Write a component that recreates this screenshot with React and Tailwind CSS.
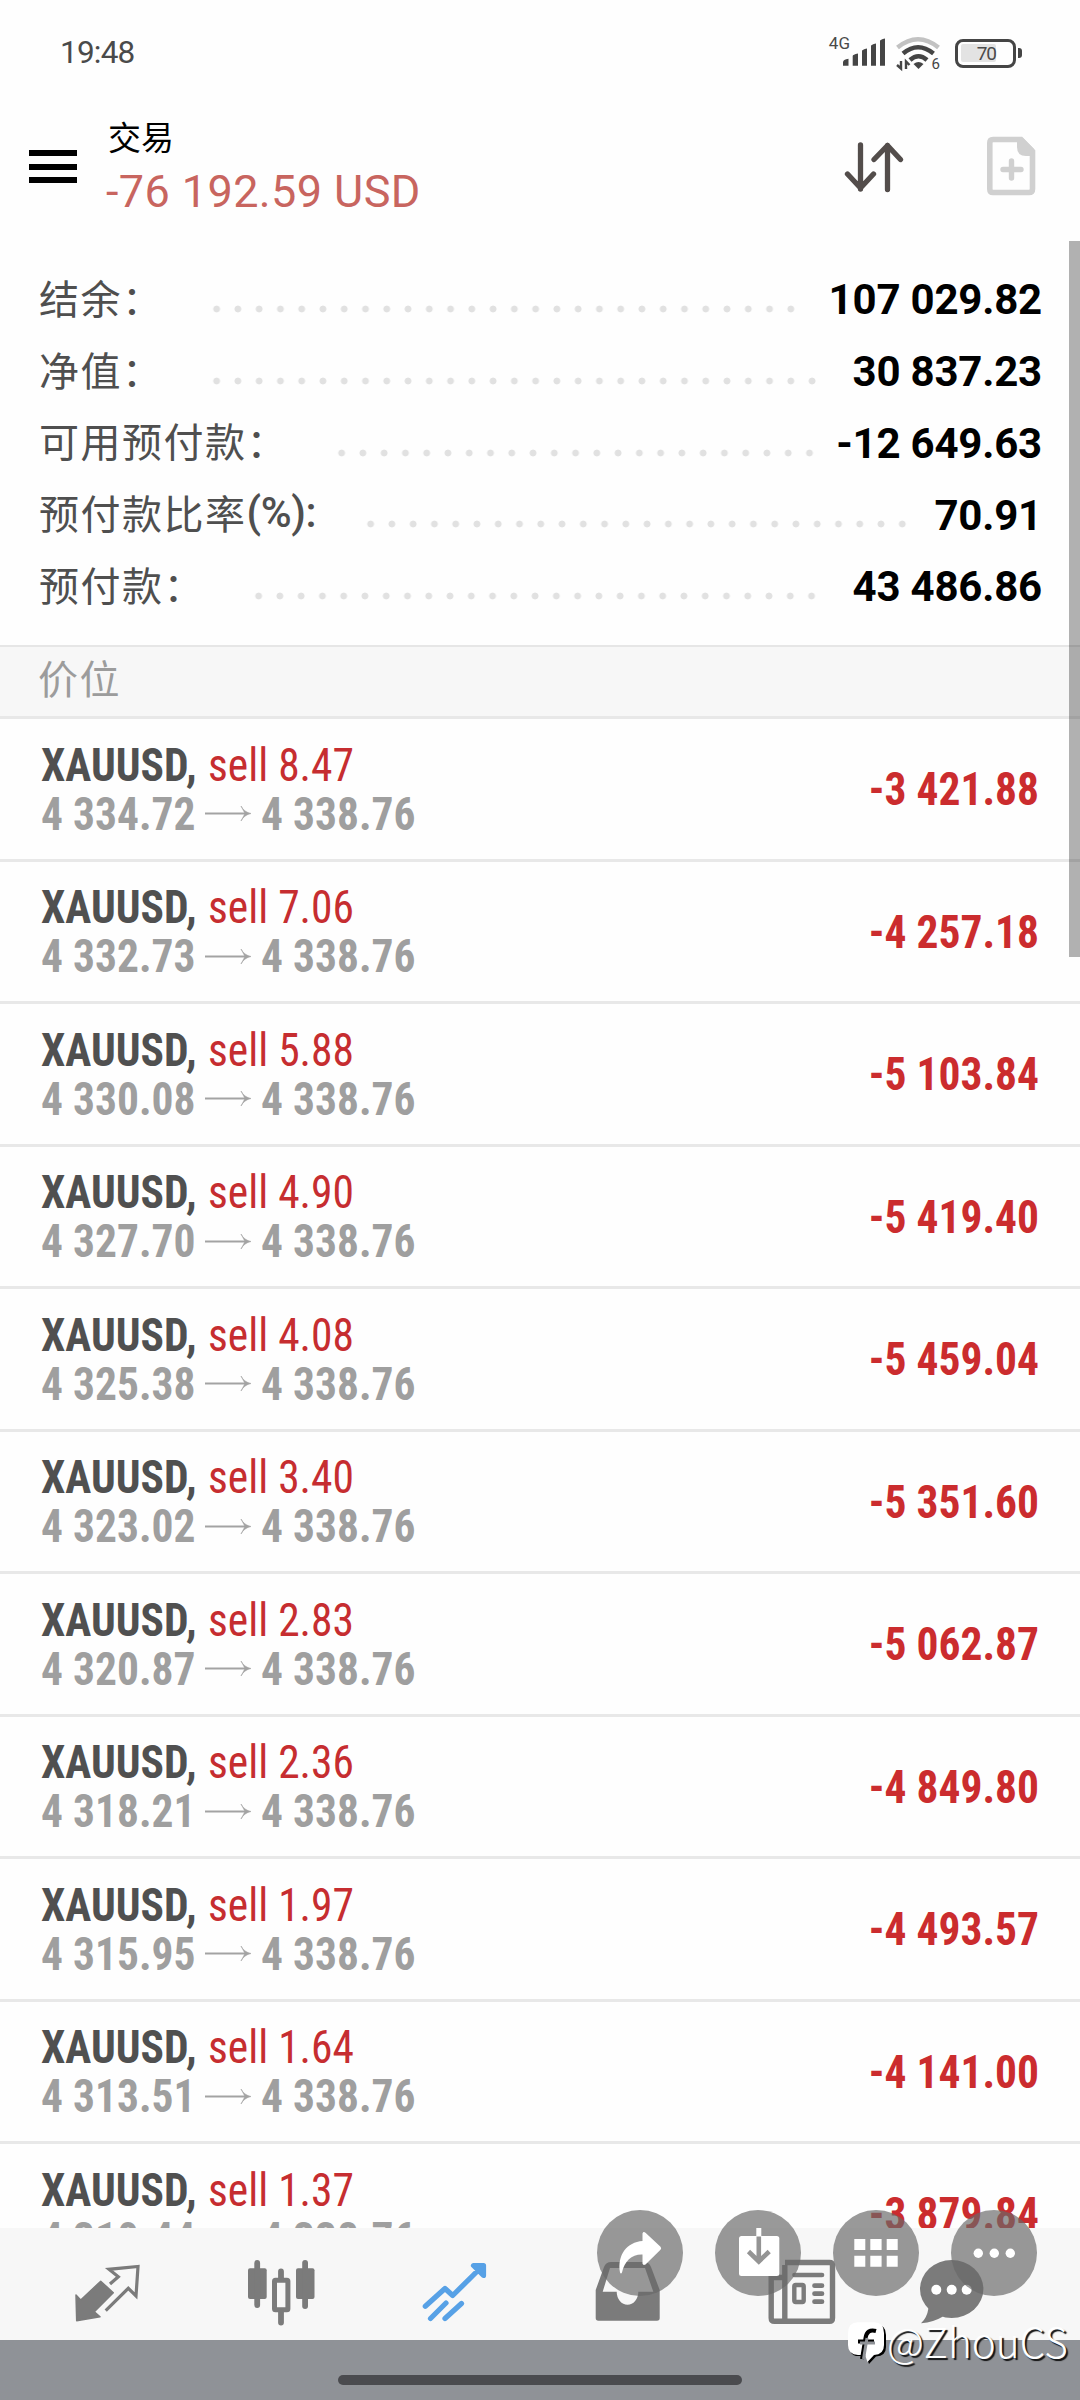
const summary = [
  { label: '结余：', value: '107 029.82', dots: 'ml-[213px] w-[596px]' },
  { label: '净值：', value: '30 837.23', dots: 'ml-[213px] w-[617px]' },
  { label: '可用预付款：', value: '-12 649.63', dots: 'ml-[338px] w-[490px]' },
  { label: '预付款比率', suffix: '(%):', value: '70.91', dots: 'ml-[367px] w-[554px]' },
  { label: '预付款：', value: '43 486.86', dots: 'ml-[255px] w-[575px]' },
];

const positions = [
  { lot: '8.47', open: '4 334.72', profit: '-3 421.88' },
  { lot: '7.06', open: '4 332.73', profit: '-4 257.18' },
  { lot: '5.88', open: '4 330.08', profit: '-5 103.84' },
  { lot: '4.90', open: '4 327.70', profit: '-5 419.40' },
  { lot: '4.08', open: '4 325.38', profit: '-5 459.04' },
  { lot: '3.40', open: '4 323.02', profit: '-5 351.60' },
  { lot: '2.83', open: '4 320.87', profit: '-5 062.87' },
  { lot: '2.36', open: '4 318.21', profit: '-4 849.80' },
  { lot: '1.97', open: '4 315.95', profit: '-4 493.57' },
  { lot: '1.64', open: '4 313.51', profit: '-4 141.00' },
  { lot: '1.37', open: '4 310.44', profit: '-3 879.84' },
];

const currentPrice = '4 338.76';

function StatusBar() {
  return (
    <div className="flex h-[106px] items-center justify-between pl-[60px] pr-[58px] text-[#4a4a4a]">
      <span className="text-[31.5px] leading-[38px] tracking-[-0.8px]">19:48</span>
      <div className="flex items-center">
        <span className="mb-[20px] text-[17px] leading-none">4G</span>
        <svg className="-ml-[9px]" width="54" height="36" fill="#454545">
          <path d="M2 30.7v-3.5q0-3 5.5-3.5v7zM11.7 30.7V21q0-1.5 5.3-2.500v12.200zM21 30.700V16q0-1.500 5-2.500v17.200zM30 30.700V11q0-1.500 5-2.500v22.200zM39 30.700V6q0-1.500 5-2.500v27.200z" />
        </svg>
        <svg className="mr-[12px]" width="48" height="38" fill="none" strokeWidth="4.500">
          <path d="M2.500 13.500Q23 -3 43.500 13.500" stroke="#c2c2c2" />
          <path d="M8 19.500Q23 7 38.500 19.500" stroke="#454545" />
          <path d="M15 26Q23.500 18.500 32 26" stroke="#454545" />
          <path d="M18.500 30q5-4 10 0l-5 5z" fill="#454545" />
          <path d="M6 27v7.500L2 31M11 35v-7.500l3.500 3.500" stroke="#454545" strokeWidth="2.400" />
          <text x="36.500" y="35" fontSize="15" fill="#454545" fontFamily="Roboto, sans-serif">6</text>
        </svg>
        <div className="flex h-[29px] w-[61px] items-center rounded-[8px] border-[3px] border-[#454545] pl-[3px]">
          <div className="flex h-[18px] w-[35px] items-center justify-end rounded-[2px] bg-[#e3e3e3] text-[19px] leading-none tracking-[-1px]">70</div>
        </div>
        <div className="ml-[2px] h-[10px] w-[4px] rounded-r-[3px] bg-[#454545]" />
      </div>
    </div>
  );
}

function Header() {
  return (
    <header className="flex h-[134px] items-start pl-[29px] pr-[44px]">
      <div className="mt-[44px] flex w-[48px] flex-col gap-[7.5px]">
        <div className="h-[6px] bg-black" />
        <div className="h-[6px] bg-black" />
        <div className="h-[6px] bg-black" />
      </div>
      <div className="ml-[29px] mt-[4px] flex-1">
        <div className="h-[53px] pl-[2px] font-['Noto_Sans_CJK_SC',sans-serif] text-[33px] leading-[52px] text-black">交易</div>
        <div className="h-[56px] text-[45px] leading-[57px] tracking-[0.4px] text-[#c8655f]">-76 192.59 USD</div>
      </div>
      <svg className="mt-[33px]" width="60" height="54" fill="none" stroke="#534d4b" strokeWidth="5.300" strokeLinecap="round" strokeLinejoin="round">
        <path d="M16.500 6v44M3.500 35l13 14 13-14M43.500 50.500V6.500M30 20.500l13.500-14 13 14" />
      </svg>
      <svg className="ml-[83px] mt-[30px]" width="49" height="60" fill="none">
        <path d="M6 3.500H34L45.500 15.500V53q0 3.500-3.500 3.500H6Q2.800 56.500 2.800 53V7q0-3.500 3.200-3.500z" stroke="#d0d0d0" strokeWidth="5.600" />
        <path d="M30 2h6l11 11v7h-8q-9 0-9-9z" fill="#d0d0d0" />
        <path d="M24.500 25v17M16 33.500h18" stroke="#d0d0d0" strokeWidth="5.400" strokeLinecap="round" />
      </svg>
    </header>
  );
}

function SummaryRow({ row }) {
  return (
    <div className="relative flex h-[71.75px] items-center justify-between pl-[39px] pr-[38px]">
      <span className="mb-[4px] flex items-center font-['Noto_Sans_CJK_SC',sans-serif] text-[40px] tracking-[1.5px] text-[#4f4f4f]">
        {row.label}
        {row.suffix && <span className="font-['Roboto',sans-serif] text-[42px] font-medium tracking-[-0.4px]">{row.suffix}</span>}
      </span>
      {/* dotted leader between label and amount */}
      <span className={`absolute left-0 top-[42px] h-[8px] bg-[radial-gradient(circle,#e1e1e1_3px,transparent_3.8px)] bg-[length:21.270px_8px] -translate-x-[7px] ${row.dots}`} />
      <span className="mt-[2px] text-[42px] font-bold tracking-[-0.2px] text-black">{row.value}</span>
    </div>
  );
}

function PositionRow({ item }) {
  return (
    <div className="flex h-[142.5px] items-center justify-between border-t-[3px] border-[#e8e8e8] pl-[41px] pr-[41px] font-['Roboto_Condensed','Roboto',sans-serif] text-[47px] leading-[49px]">
      <div>
        <div className="flex">
          <span className="w-[167px] origin-left scale-x-[0.925] font-bold text-[#505050]">XAUUSD,</span>
          <span className="origin-left scale-x-[0.925] text-[#c62d30]">sell {item.lot}</span>
        </div>
        <div className="flex items-center font-bold text-[#9f9f9f]">
          <span className="w-[164px] origin-left scale-x-[0.925] whitespace-nowrap">{item.open}</span>
          <svg className="mr-[9px]" width="47" height="18" fill="none" stroke="#a3a3a3">
            <path d="M0 9.500h43" strokeWidth="1.800" />
            <path d="M36 2q3 6 10 7.500q-7 1.500-10 7.500l4-7.500z" fill="#a3a3a3" strokeWidth="0.600" />
          </svg>
          <span className="origin-left scale-x-[0.925]">{currentPrice}</span>
        </div>
      </div>
      <span className="origin-right scale-x-[0.925] font-bold text-[#cb2c2e]">{item.profit}</span>
    </div>
  );
}

function NavBar() {
  return (
    <nav className="flex h-[112px] items-center bg-[#f7f7f7] pl-[21px] text-[#7b7b7b]">
      <div className="flex w-[173.500px] justify-center">
        <svg width="72" height="84">
          <path d="M28.700 39.300L41.300 50.700 22.300 69.700 28 74.700 4.700 78.700 4 53 8.700 58z" fill="currentColor" stroke="currentColor" strokeWidth="1.500" strokeLinejoin="round" />
          <path d="M38 42L46.300 34.700 37 27.300 66 24.500 64 54 56.300 46.300 33.700 68.700" fill="none" stroke="currentColor" strokeWidth="3.200" />
        </svg>
      </div>
      <div className="flex w-[173.500px] justify-center">
        <svg width="72" height="84" fill="currentColor">
          <rect x="3" y="26.300" width="18.700" height="30.700" rx="2" />
          <rect x="9.300" y="18" width="5.800" height="48" rx="2.900" />
          <rect x="51" y="26.300" width="18.500" height="30.700" rx="2" />
          <rect x="57.200" y="18" width="5.800" height="49" rx="2.900" />
          <rect x="29.500" y="38.200" width="13.400" height="29.600" rx="1" fill="none" stroke="currentColor" strokeWidth="5" />
          <path d="M36 29.500v7M36 70v10.500" stroke="currentColor" strokeWidth="5.800" strokeLinecap="round" />
        </svg>
      </div>
      <div className="flex w-[173.500px] justify-center">
        <svg width="72" height="84" fill="none" stroke="#57a1e6" strokeWidth="5.200" strokeLinecap="round" strokeLinejoin="round">
          <path d="M6.300 64.300L26 46.500 33.700 53.500 63 24.500M54.500 23.500H64.500V33.500zM11.500 76.500L27 61M26 76.500L42.500 61.500" />
        </svg>
      </div>
      <div className="flex w-[173.500px] justify-center">
        <svg width="72" height="84" fill="currentColor">
          <path fillRule="evenodd" d="M3.700 48L12 25q2-5 7-5h33q5 0 7 5l8.700 23v28q0 2.700-2.700 2.700H6.400q-2.700 0-2.700-2.700zM18 26L10.700 49.700h14a10.800 13 0 0 0 21.600 0h15L53 26z" />
        </svg>
      </div>
      <div className="flex w-[173.500px] justify-center">
        <svg width="72" height="84" fill="none" stroke="currentColor">
          <path d="M19 20.500H63.500Q66.500 20.500 66.500 23.500V76Q66.500 79.300 63.500 79.300H8.500Q5.200 79.300 5.200 76V35.500H18.500M18.800 79V23" strokeWidth="5.400" />
          <path d="M28.500 33H56M48.500 43.700H56M48.500 51.700H56M48.500 59.700H56" strokeWidth="4.700" strokeLinecap="round" />
          <rect x="28.300" y="43" width="9.400" height="17" rx="1.500" strokeWidth="4.400" />
        </svg>
      </div>
      <div className="flex w-[126px] justify-center">
        <svg width="72" height="84">
          <path d="M12.500 66Q11 76 5 81.300Q18 80 27 74.500z" fill="currentColor" />
          <ellipse cx="35.700" cy="47" rx="31.700" ry="29" fill="currentColor" />
          <g fill="#fff">
            <circle cx="20.300" cy="47.700" r="5" />
            <circle cx="35.700" cy="47.700" r="5" />
            <circle cx="50.700" cy="47.700" r="5" />
          </g>
        </svg>
      </div>
    </nav>
  );
}

function FloatingButton({ children }) {
  return (
    <button className="h-[86px] w-[86px] rounded-full bg-[rgba(105,105,105,0.680)]">
      <svg width="86" height="86" fill="#fff">{children}</svg>
    </button>
  );
}

function FloatingActions() {
  return (
    <div className="absolute left-[597px] top-[2210px] flex gap-[32px]">
      <FloatingButton>
        <path d="M45.500 23.500q.8-2.500 3-.8L63.500 36.700q1.300 1.500 0 3L48.500 54.500q-2.500 1.200-3-1V44.500C35 44 27.500 51 25 62.500q-1 2-2 0C20 45 30 32 45.500 31z" />
      </FloatingButton>
      <FloatingButton>
        <rect x="24" y="26" width="40.300" height="40" rx="2.500" />
        <rect x="41.300" y="18" width="5" height="8" />
        <path d="M43.800 26.500V51M33.500 41.500L43.800 51.500 54.200 41.500" fill="none" stroke="#949494" strokeWidth="4.600" />
      </FloatingButton>
      <FloatingButton>
        <path d="M21.300 29h11v11h-11zM37.300 29h11.300v11H37.300zM53.700 29h11v11h-11zM21.300 45.700h11v11h-11zM37.300 45.700h11.300v11H37.300zM53.700 45.700h11v11h-11z" />
      </FloatingButton>
      <FloatingButton>
        <circle cx="27.300" cy="43.300" r="4.700" />
        <circle cx="43.300" cy="43.300" r="4.700" />
        <circle cx="59.300" cy="43.300" r="4.700" />
      </FloatingButton>
    </div>
  );
}

function Signature() {
  return (
    <div className="absolute left-[842px] top-[2320px] flex h-[46px] items-center">
      <svg width="45" height="46" fill="none">
        <path d="M14 4.500H34Q44 4.500 44 15V27Q44 36 34 36.500L27 44 24 36H14Q8 35 7.500 27V14Q8 5 14 4.500z" fill="#000" />
        <path d="M16 2.300H32Q42 2.300 42 13V25Q42 34.500 32 35L25.500 42 23 35H16Q6 34.500 6 25V13Q6 2.300 16 2.300z" fill="#fff" />
        <path d="M34 11Q25 8.500 23.500 18L20 39M16 21.500H32" stroke="#000" strokeWidth="4" />
        <path d="M25 18L21.500 39M18 23H33" stroke="#8f9297" strokeWidth="3" />
      </svg>
      <span className="-mt-[5px] font-['Noto_Sans_CJK_SC',sans-serif] text-[40.500px] font-light leading-[46px] text-white [text-shadow:2px_2px_1px_#111]">@ZhouCS</span>
    </div>
  );
}

export default function App() {
  return (
    <div className="relative h-[2400px] w-[1080px] overflow-hidden bg-[#fefefe] font-['Roboto',sans-serif]">
      <StatusBar />
      <Header />

      <main className="relative h-[1988px] overflow-hidden pt-[23px]">
        <div className="h-[382px]">
          {summary.map((row) => (
            <SummaryRow key={row.label} row={row} />
          ))}
        </div>
        <div className="flex h-[71px] items-center border-t-[2px] border-[#e6e6e6] bg-[#f7f7f7] pb-[10px] pl-[38px] font-['Noto_Sans_CJK_SC',sans-serif] text-[40px] leading-[60px] tracking-[1.5px] text-[#9c9c9c]">
          价位
        </div>
        {positions.map((item) => (
          <PositionRow key={item.lot} item={item} />
        ))}
        <div className="absolute right-0 top-[1px] h-[716px] w-[11px] bg-black/30" />
      </main>

      <NavBar />
      <div className="flex h-[60px] justify-center bg-[#8f9297] pt-[35px]">
        <div className="h-[10px] w-[404px] rounded-full bg-[#4a4b4f]" />
      </div>

      <FloatingActions />
      <Signature />
    </div>
  );
}
